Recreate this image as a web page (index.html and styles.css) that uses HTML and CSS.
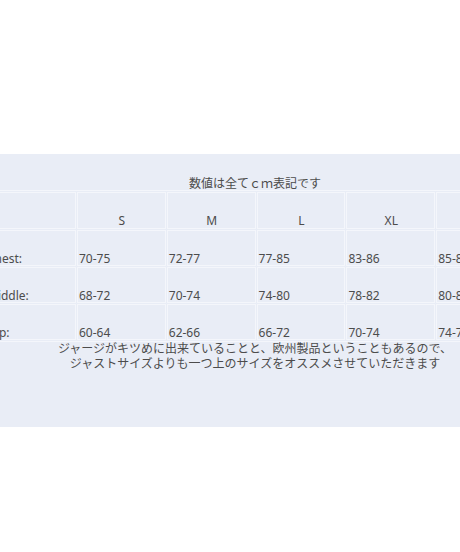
FILE: index.html
```html
<!DOCTYPE html>
<html lang="ja">
<head>
<meta charset="utf-8">
<link rel="stylesheet" href="styles.css">
</head>
<body>
<div class="panel">
  <div class="wrap">
    <div class="caption">数値は全てｃｍ表記です</div>
    <table class="sizes">
      <tr class="head"><td></td><td>S</td><td>M</td><td>L</td><td>XL</td><td>XXL</td></tr>
      <tr><td>Chest:</td><td>70-75</td><td>72-77</td><td>77-85</td><td>83-86</td><td>85-88</td></tr>
      <tr><td>Middle:</td><td>68-72</td><td>70-74</td><td>74-80</td><td>78-82</td><td>80-84</td></tr>
      <tr><td>Hip:</td><td>60-64</td><td>62-66</td><td>66-72</td><td>70-74</td><td>74-78</td></tr>
    </table>
    <p class="note">ジャージがキツめに出来ていることと、欧州製品ということもあるので、<br>ジャストサイズよりも一つ上のサイズをオススメさせていただきます</p>
  </div>
</div>
</body>
</html>
```
FILE: styles.css
```css
html, body {
  margin: 0;
  padding: 0;
  background: #ffffff;
}
body {
  width: 460px;
  height: 552px;
  overflow: hidden;
  font-family: "Noto Sans", "Noto Sans CJK JP", sans-serif;
  color: #4c4c4c;
  font-size: 12px;
}
.panel {
  margin-top: 154px;
  height: 273px;
  background: #e9edf6;
  overflow: hidden;
  padding-top: 22px;
  box-sizing: border-box;
}
.wrap {
  width: 544px;
  margin-left: -17px;
  text-align: center;
}
.caption {
  font-family: "Noto Sans CJK JP", sans-serif;
  line-height: 14px;
}
.sizes {
  margin: 0 auto;
  border: 1px solid #f4f6fb;
  border-collapse: separate;
  border-spacing: 1px;
  text-align: left;
}
.sizes td {
  border: 1px solid #f4f6fb;
  width: 87px;
  height: 34px;
  padding: 0 0 0 1px;
  vertical-align: bottom;
  line-height: 13px;
  white-space: nowrap;
}
.sizes td:first-child {
  width: 89px;
}
.sizes .head td {
  text-align: center;
  height: 35px;
  line-height: 14px;
}
.note {
  margin: -2px 0 0;
  font-family: "Noto Sans CJK JP", sans-serif;
  line-height: 15px;
}
```
